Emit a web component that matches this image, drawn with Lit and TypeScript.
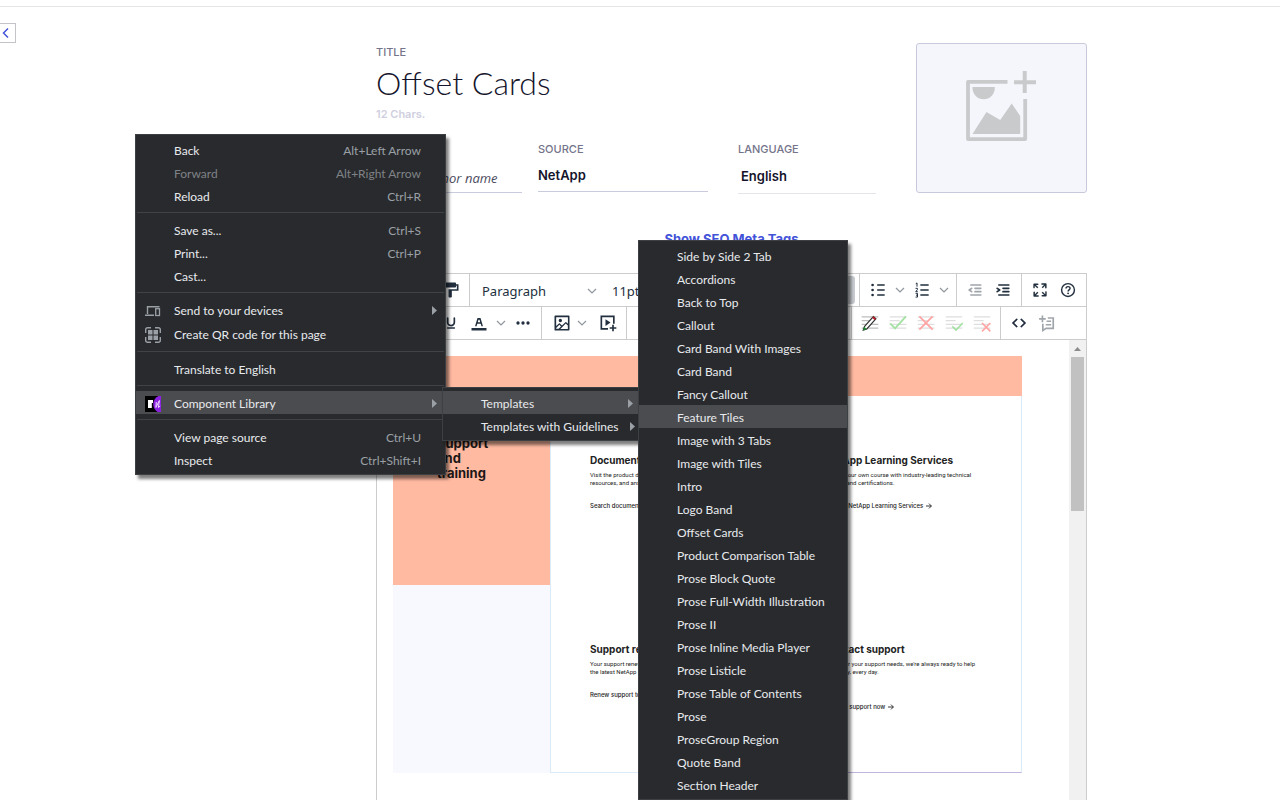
import { LitElement, html, css, svg, nothing } from "lit";
import { customElement, property } from "lit/decorators.js";

const chevron = html`<svg class="chev" viewBox="0 0 10 10" aria-hidden="true"><path d="M1 3l4 4 4-4" fill="none" stroke="#8f969e" stroke-width="1.200"/></svg>`;

const lines = (color: string) => svg`<path d="M2 4.500h20M2 9h12M2 13.500h20M2 18h20" stroke=${color} stroke-width="1.500" fill="none"/>`;

const glyphs: Record<string, unknown> = {
  undo: svg`<path d="M6.4 8H12c3.7 0 6.2 2 6.8 5.1.6 2.7-.4 5.6-2.3 6.8a1 1 0 0 1-1-1.8c1.1-.6 1.8-2.7 1.4-4.6-.5-2.1-2.1-3.5-4.9-3.5H6.4l3.3 3.3a1 1 0 1 1-1.4 1.4l-5-5a1 1 0 0 1 0-1.4l5-5a1 1 0 0 1 1.4 1.4L6.4 8Z"/>`,
  redo: svg`<path transform="matrix(-1 0 0 1 24 0)" d="M6.4 8H12c3.7 0 6.2 2 6.8 5.1.6 2.7-.4 5.6-2.3 6.8a1 1 0 0 1-1-1.8c1.1-.6 1.8-2.7 1.4-4.6-.5-2.1-2.1-3.5-4.9-3.5H6.4l3.3 3.3a1 1 0 1 1-1.4 1.4l-5-5a1 1 0 0 1 0-1.4l5-5a1 1 0 0 1 1.4 1.4L6.4 8Z"/>`,
  painter: svg`<path d="M18 5V4c0-.5-.4-1-1-1H5a1 1 0 0 0-1 1v4c0 .6.5 1 1 1h12c.6 0 1-.4 1-1V7h1v4H9v9c0 .6.4 1 1 1h2c.6 0 1-.4 1-1v-7h8V5h-3Z"/>`,
  bold: svg`<path d="M8 5h5a3.5 3.5 0 0 1 2 6.4A4 4 0 0 1 13.500 19H8zm2.200 2v3.800H13a1.900 1.900 0 0 0 0-3.800zm0 5.800V17h3.100a2.100 2.100 0 0 0 0-4.200z" fill-rule="evenodd"/>`,
  italic: svg`<path d="M10 5h7v2h-2.600l-2.600 10H14v2H7v-2h2.600l2.600-10H10z"/>`,
  underline: svg`<path d="M16 5c.6 0 1 .4 1 1v5.500a4 4 0 0 1-.4 1.800l-1 1.400a5.300 5.300 0 0 1-5.500 1 5 5 0 0 1-1.600-1c-.5-.4-.8-.9-1.100-1.400a4 4 0 0 1-.4-1.800V6c0-.6.4-1 1-1s1 .4 1 1v5.500c0 .3 0 .6.2 1l.6.7a3.300 3.300 0 0 0 2.200.8 3.400 3.400 0 0 0 2.200-.8c.3-.2.4-.5.6-.8l.2-.9V6c0-.6.4-1 1-1zM8 17h8c.6 0 1 .4 1 1s-.4 1-1 1H8a1 1 0 0 1 0-2z"/>`,
  forecolor: svg`<path d="M3 18h18v3H3z"/><path fill-rule="evenodd" d="M8.700 16h-.8a.5.5 0 0 1-.5-.6l2.700-9c.1-.3.3-.4.5-.4h2.800c.2 0 .4.100.5.400l2.700 9a.5.5 0 0 1-.5.600h-.8a.5.5 0 0 1-.4-.4l-.7-2.200c0-.3-.3-.4-.5-.4h-3.400c-.2 0-.4.100-.5.400l-.7 2.200c0 .3-.2.400-.4.400Zm2.600-7.600-.6 2a.5.5 0 0 0 .5.600h1.600a.5.5 0 0 0 .5-.6l-.6-2c0-.3-.3-.4-.5-.4h-.4c-.2 0-.4.100-.5.400Z"/>`,
  more: svg`<circle cx="6" cy="12" r="2"/><circle cx="12" cy="12" r="2"/><circle cx="18" cy="12" r="2"/>`,
  image: svg`<path fill-rule="nonzero" d="m5 15.700 3.300-3.200c.3-.3.7-.3 1 0L12 15l4.100-4c.3-.4.8-.4 1 0l2 1.900V5H5v10.700zM5 18V19h3l2.800-2.900-2-2L5 17.900zm14-3-2.500-2.400-6.400 6.500H19v-4zM4 3h16c.6 0 1 .4 1 1v16c0 .6-.4 1-1 1H4a1 1 0 0 1-1-1V4c0-.6.4-1 1-1zm6 8a2 2 0 1 0 0-4 2 2 0 0 0 0 4z"/>`,
  media: svg`<path d="M12 19H4V4h15v9" fill="none" stroke="currentColor" stroke-width="2"/><path d="M9 7.500v8l6-4z"/><path d="M18 14v8M14 18h8" stroke="currentColor" stroke-width="2"/>`,
  bullets: svg`<path d="M11 5h9v2h-9zm0 6h9v2h-9zm0 6h9v2h-9z"/><circle cx="5.500" cy="6" r="1.600"/><circle cx="5.500" cy="12" r="1.600"/><circle cx="5.500" cy="18" r="1.600"/>`,
  numbers: svg`<path d="M10 5h10v2H10zm0 6h10v2H10zm0 6h10v2H10z"/><path d="M4.500 4.500 6 3.500V8M4.300 10h2.200v1.500L4.500 14h2.400M4.300 16h2.300v4.500H4.300M4.800 18.200h1.800" fill="none" stroke="currentColor" stroke-width="1.200"/>`,
  outdent: svg`<path d="M7 5h12c.6 0 1 .4 1 1s-.4 1-1 1H7a1 1 0 1 1 0-2zm5 4h7c.6 0 1 .4 1 1s-.4 1-1 1h-7a1 1 0 0 1 0-2zm0 4h7c.6 0 1 .4 1 1s-.4 1-1 1h-7a1 1 0 0 1 0-2zm-5 4h12a1 1 0 0 1 0 2H7a1 1 0 0 1 0-2zm1.600-3.800a1 1 0 0 1-1.200 1.600l-3-2a1 1 0 0 1 0-1.600l3-2a1 1 0 0 1 1.200 1.600L6.800 12l1.800 1.200z"/>`,
  indent: svg`<path d="M7 5h12c.6 0 1 .4 1 1s-.4 1-1 1H7a1 1 0 1 1 0-2zm5 4h7c.6 0 1 .4 1 1s-.4 1-1 1h-7a1 1 0 0 1 0-2zm0 4h7c.6 0 1 .4 1 1s-.4 1-1 1h-7a1 1 0 0 1 0-2zm-5 4h12a1 1 0 0 1 0 2H7a1 1 0 0 1 0-2zm-2.600-3.800L6.200 12l-1.800-1.200a1 1 0 0 1 1.200-1.600l3 2a1 1 0 0 1 0 1.600l-3 2a1 1 0 1 1-1.200-1.600z"/>`,
  fullscreen: svg`<path d="m15.300 10-1.200-1.300 2.900-3h-2.300a.9.9 0 1 1 0-1.700H19c.5 0 .9.400.9.900v4.400a.9.9 0 1 1-1.800 0V7l-2.900 3Zm0 4 3 3v-2.300a.9.9 0 1 1 1.700 0V19c0 .5-.4.900-.9.900h-4.400a.9.9 0 1 1 0-1.800H17l-3-2.900 1.300-1.200ZM10 15.400l-2.900 3h2.300a.9.9 0 1 1 0 1.700H5a.9.9 0 0 1-.9-.9v-4.400a.9.9 0 1 1 1.800 0V17l2.900-3 1.200 1.300ZM8.700 10 5.700 7v2.300a.9.9 0 0 1-1.700 0V5c0-.5.400-.9.900-.9h4.400a.9.9 0 0 1 0 1.800H7l3 2.900-1.300 1.200Z"/>`,
  help: svg`<circle cx="12" cy="12" r="7.700" fill="none" stroke="currentColor" stroke-width="1.700"/><path d="M9.600 10.200c0-3 4.900-3 4.900-.2 0 1.800-2.400 1.900-2.400 3.700" fill="none" stroke="currentColor" stroke-width="1.700"/><circle cx="12.100" cy="16" r="1.100"/>`,
  track: svg`${lines("#bdbdbd")}<path d="M5.500 16 16 4.300l3 2.700L8.200 19.100 4 20.500z" fill="#fff" stroke="#333" stroke-width="1.500"/><path d="m16 4 3.200 3-1.500 1.600-3.100-2.900z" fill="#b3202a"/><path d="m4.900 16.300 3.300 3.300-4.400 1.400z" fill="#1f8a34"/>`,
  accept: svg`${lines("#dedede")}<path d="m2.500 12.500 6 6L21.500 4" fill="none" stroke="#a4e2a4" stroke-width="2.200"/>`,
  reject: svg`${lines("#dedede")}<path d="m4 4 16 16M20 4 4 20" fill="none" stroke="#ffa5a5" stroke-width="2.200"/>`,
  acceptOne: svg`${lines("#dedede")}<path d="m10 16 4.500 4.500L22.500 12" fill="none" stroke="#a4e2a4" stroke-width="2"/>`,
  rejectOne: svg`${lines("#dedede")}<path d="m12 12 10 10M22 12 12 22" fill="none" stroke="#ffa5a5" stroke-width="2"/>`,
  code: svg`<path d="M9.800 15.700c.3.3.3.8 0 1-.3.400-.9.400-1.200 0l-4.400-4.100a.8.8 0 0 1 0-1.200l4.400-4.200c.3-.3.9-.3 1.200 0 .3.3.3.8 0 1.100L6 12l3.800 3.700ZM14.200 15.700c-.3.3-.3.8 0 1 .4.400.9.400 1.200 0l4.400-4.100c.3-.3.3-.9 0-1.200l-4.400-4.200a.8.8 0 0 0-1.200 0c-.3.3-.3.8 0 1.100L18 12l-3.800 3.700Z" stroke="currentColor" stroke-width=".5"/>`,
  comment: svg`<path d="M6.500 3v8M2.500 7h8" stroke="currentColor" stroke-width="2"/><path d="M13 6h6.500v12.500H11L7 21v-8" fill="none" stroke="currentColor" stroke-width="2"/><path d="M11.500 10h5.500M10.500 14h6.500" stroke="currentColor" stroke-width="1.800"/>`,
};

@customElement("tool-button")
class ToolButton extends LitElement {
  @property() icon = "";
  @property() label = "";
  @property() kind = "plain";
  @property({ type: Boolean }) dim = false;

  static styles = css`
    :host { display: flex; }
    button {
      display: flex; align-items: center; justify-content: center;
      width: 28px; height: 28px; padding: 0; border: 0; border-radius: 3px;
      background: none; color: #222f3e; fill: currentColor;
    }
    .dim { color: #a0a5ab; }
    .arrow { width: 16px; }
    .menu { width: 48px; gap: 5px; justify-content: flex-start; padding-left: 6px; }
    .icon { width: 20px; height: 20px; flex: none; }
    .chev { width: 10px; height: 10px; flex: none; }
  `;

  render() {
    const art = html`<svg class="icon" viewBox="0 0 24 24" aria-hidden="true">${glyphs[this.icon]}</svg>`;
    return html`
      <button class="${this.kind === "menu" ? "menu" : ""} ${this.dim ? "dim" : ""}" aria-label=${this.label}>
        ${art}${this.kind === "menu" ? chevron : nothing}
      </button>
      ${this.kind === "split" ? html`<button class="arrow" aria-label="${this.label} options">${chevron}</button>` : nothing}
    `;
  }
}

type Entry = { text: string; keys?: string; icon?: string; sub?: boolean; on?: boolean; off?: boolean } | null;

const menuIcons: Record<string, unknown> = {
  devices: html`<svg viewBox="0 0 16 16" width="16" height="16" aria-hidden="true"><path d="M2.500 11V3.700h12M0 12.300h9" fill="none" stroke="#9aa0a6" stroke-width="1.400"/><rect x="10.700" y="5.700" width="3.800" height="6.800" fill="none" stroke="#9aa0a6" stroke-width="1.300"/></svg>`,
  qr: html`<svg viewBox="0 0 16 16" width="16" height="16" aria-hidden="true"><path d="M.7 6V2.500A1.800 1.800 0 0 1 2.500.7H6M10 .7h3.500a1.800 1.800 0 0 1 1.800 1.800V6M15.300 10v3.500a1.800 1.800 0 0 1-1.800 1.800H10M6 15.300H2.500a1.800 1.800 0 0 1-1.800-1.800V10" fill="none" stroke="#9aa0a6" stroke-width="1.400"/><path d="M3 3h4.500v4.500H3zM8.500 3H13v4.500H8.500zM3 8.500h4.500V13H3zM8.500 8.500H13V13H8.500z" fill="#9aa0a6"/></svg>`,
  library: html`<svg viewBox="0 0 16 16" width="16" height="16" aria-hidden="true"><path d="M0 0h16v16H0z"/><path d="M3 4h5v3H6.800v5H3z" fill="#fff"/><path d="M16 0v16h-3.500C9.500 14 8 11 8.300 7.500 8.600 4 10.500 1.500 13.500 0z" fill="#8a22e0"/><path d="m11.300 6-.4 5.500 3.500-7-1 7 1.800-1.500" fill="none" stroke="#f0dcff" stroke-width="1"/></svg>`,
};

@customElement("dark-menu")
class DarkMenu extends LitElement {
  @property({ attribute: false }) entries: Entry[] = [];

  static styles = css`
    :host {
      display: block; box-sizing: border-box; padding: 3px 0;
      border: 1px solid #3c4043; background: #292a2d;
      box-shadow: 3px 4px 3px rgba(0, 0, 0, 0.5);
      font: 12px/21px Lato, "Open Sans", sans-serif;
    }
    .row {
      display: grid; grid-template-columns: 38px 1fr auto 14px; align-items: center;
      box-sizing: border-box; width: 100%; height: 23px; padding: 2px 8px 0 0; border: 0;
      background: none; color: #e8eaed; font: inherit; text-align: left; white-space: nowrap;
    }
    .tall { height: 25px; }
    .on { background: #4b4c4f; }
    .off { color: #7f8387; }
    .icon { display: flex; padding-left: 9px; }
    .keys { color: #9aa0a6; margin-right: 2px; }
    .off .keys { color: #7f8387; }
    .arrow { justify-self: end; width: 5px; height: 9px; fill: #9aa0a6; }
    hr { height: 1px; margin: 5px 1px; border: 0; background: #3f4246; }
  `;

  render() {
    return html`${this.entries.map((e) =>
      e === null
        ? html`<hr />`
        : html`<button role="menuitem" class="row ${e.on ? "on" : ""} ${e.off ? "off" : ""} ${e.icon === "qr" ? "tall" : ""}" ?disabled=${!!e.off}>
            <span class="icon">${e.icon ? menuIcons[e.icon] : nothing}</span>
            <span>${e.text}</span>
            <span class="keys">${e.keys ?? nothing}</span>
            ${e.sub ? html`<svg class="arrow" viewBox="0 0 5 9" aria-hidden="true"><path d="M0 0l5 4.500L0 9z"/></svg>` : html`<span></span>`}
          </button>`
    )}`;
  }
}

const pageMenu: Entry[] = [
  { text: "Back", keys: "Alt+Left Arrow" },
  { text: "Forward", keys: "Alt+Right Arrow", off: true },
  { text: "Reload", keys: "Ctrl+R" },
  null,
  { text: "Save as...", keys: "Ctrl+S" },
  { text: "Print...", keys: "Ctrl+P" },
  { text: "Cast..." },
  null,
  { text: "Send to your devices", icon: "devices", sub: true },
  { text: "Create QR code for this page", icon: "qr" },
  null,
  { text: "Translate to English" },
  null,
  { text: "Component Library", icon: "library", sub: true, on: true },
  null,
  { text: "View page source", keys: "Ctrl+U" },
  { text: "Inspect", keys: "Ctrl+Shift+I" },
];

const libraryMenu: Entry[] = [
  { text: "Templates", sub: true, on: true },
  { text: "Templates with Guidelines", sub: true },
];

const templateMenu: Entry[] = [
  "Side by Side 2 Tab", "Accordions", "Back to Top", "Callout", "Card Band With Images", "Card Band",
  "Fancy Callout", "Feature Tiles", "Image with 3 Tabs", "Image with Tiles", "Intro", "Logo Band",
  "Offset Cards", "Product Comparison Table", "Prose Block Quote", "Prose Full-Width Illustration",
  "Prose II", "Prose Inline Media Player", "Prose Listicle", "Prose Table of Contents", "Prose",
  "ProseGroup Region", "Quote Band", "Section Header",
].map((text) => ({ text, on: text === "Feature Tiles" }));

const cards = [
  { head: "Documentation", body: ["Visit the product documentation,", "resources, and answers."], link: "Search documentation" },
  { head: "NetApp Learning Services", body: ["Design your own course with industry-leading technical", "training and certifications."], link: "Explore NetApp Learning Services" },
  { head: "Support renewals", body: ["Your support renewal gives you", "the latest NetApp updates."], link: "Renew support today" },
  { head: "Contact support", body: ["Whatever your support needs, we're always ready to help", "every day, every day."], link: "Contact support now", low: true },
];

@customElement("app-root")
class AppRoot extends LitElement {
  static styles = css`
    :host {
      display: block; position: relative; height: 100vh; overflow: hidden; background: #fff;
      font: 14px/20px Inter, "Open Sans", sans-serif; color: #14142b;
    }
    * { box-sizing: border-box; }
    .topbar { height: 7px; border-bottom: 1px solid #e4e4e6; }
    .layout { display: grid; grid-template-columns: 376px minmax(0, 1fr) 193px; }
    .collapse {
      display: flex; align-items: center; width: 16px; height: 20px; margin-top: 16px; padding: 0 0 0 2px;
      border: 1px solid #c4c4c8; border-left: 0; background: #fff;
    }
    main { padding-top: 36px; }
    .head { display: flex; justify-content: space-between; align-items: flex-start; }
    .label { display: block; font-size: 11px; line-height: 18px; font-weight: 500; color: #74748a; }
    input, select {
      display: block; width: 100%; margin: 0; padding: 0; border: 0; border-radius: 0; outline: 0;
      background: none; font: inherit; color: inherit; appearance: none;
    }
    .title { height: 44px; font: 300 32px/44px Lato, sans-serif; }
    .chars { margin-top: 2px; font-size: 11px; line-height: 14px; font-weight: 600; color: #cfcfe0; }
    .fields { display: flex; align-items: flex-start; margin-top: 19px; }
    .author { width: 146px; margin-right: 16px; padding-top: 18px; }
    .source { width: 170px; margin-right: 30px; }
    .language { width: 138px; }
    .fields input, .fields select { height: 34px; border-bottom: 1px solid #cbcbe0; font-size: 13px; font-weight: 600; }
    .fields .name { height: 35px; padding-top: 6px; font-family: "Open Sans", sans-serif; font-weight: 400; font-style: italic; }
    .name::placeholder { color: #4b4b5e; opacity: 1; }
    .fields select { height: 36px; padding-left: 3px; border-color: #e4e4ea; }
    .thumb {
      display: flex; justify-content: center; width: 171px; height: 150px; padding: 27px 0 0;
      border: 1px solid #c9c9de; border-radius: 3px; background: #f5f6fb;
    }
    .seo { display: block; width: fit-content; margin: 35px auto 24px; font-size: 13px; font-weight: 700; color: #4353d9; text-decoration: none; }
    .editor { border: 1px solid #ccc; color: #222f3e; }
    .tools { display: flex; height: 33px; border-bottom: 1px solid #ccc; }
    .group { display: flex; align-items: center; padding: 0 4px; border-right: 1px solid #ccc; }
    .group:last-child { border-right: 0; }
    .wide { flex: 1; min-width: 0; }
    .pick {
      display: flex; align-items: center; justify-content: space-between; width: 130px; height: 28px;
      padding: 2px 7px 0 8px; border: 0; background: none; color: #222f3e; font: 13px/20px "Noto Sans", sans-serif;
    }
    .pick .chev { width: 10px; height: 10px; }
    .active { width: 28px; height: 28px; margin-left: auto; border: 0; border-radius: 3px; background: #c8cbcf; }
    .last { width: 85px; }
    .canvas { display: flex; height: 560px; }
    .page { flex: 1; padding: 16px 47px 0 16px; }
    .scroll { width: 17px; padding: 7px 2px; background: #f1f1f1; }
    .scroll svg { display: block; margin: 0 auto 6px; }
    .thumbbar { width: 13px; height: 154px; background: #c1c1c1; }
    .band { height: 40px; background: #ffbaa1; }
    .board { display: grid; grid-template-columns: 157px 1fr 1fr; grid-template-rows: 189px 188px; }
    .lead { padding: 40px 0 0 44px; background: #ffbaa1; color: #1c1717; font-size: 13px; line-height: 15px; font-weight: 700; }
    .pale { background: #f7f9ff; }
    .card { padding: 57px 0 0 39px; white-space: nowrap; min-width: 0; color: #222; }
    .first { border-left: 1px solid #dcebfa; }
    .second { border-right: 1px solid #dcebfa; }
    .bottom { border-bottom: 1px solid #dcebfa; }
    .bottom.second { border-bottom-color: #c3b3df; }
    .card h3 { margin: 0 0 4px; font-size: 10px; line-height: 14px; font-weight: 700; }
    .card p { margin: 0; font-family: Roboto, sans-serif; font-size: 6px; line-height: 8px; }
    .card a { display: flex; align-items: center; gap: 3px; margin-top: 15px; font-size: 6px; line-height: 8px; font-weight: 500; color: inherit; text-decoration: none; }
    .card .low { margin-top: 27px; }
    dark-menu { position: absolute; }
    .m1 { left: 135px; top: 134px; width: 311px; }
    .m2 { left: 442px; top: 387px; width: 200px; }
    .m3 { left: 638px; top: 240px; width: 210px; }
  `;

  render() {
    const tb = (icon: string, label: string, kind = "plain", dim = false) =>
      html`<tool-button .icon=${icon} .label=${label} .kind=${kind} .dim=${dim}></tool-button>`;
    return html`
      <div class="topbar"></div>
      <div class="layout">
        <div>
          <button class="collapse" aria-label="Collapse"><svg width="8" height="12" viewBox="0 0 8 12"><path d="M6 1.500 1.500 6 6 10.500" fill="none" stroke="#4353d9" stroke-width="1.500"/></svg></button>
        </div>
        <main>
          <div class="head">
            <div>
              <label class="label" for="title">TITLE</label>
              <input id="title" class="title" value="Offset Cards" />
              <div class="chars">12 Chars.</div>
              <div class="fields">
                <div class="author">
                  <input class="name" aria-label="Author" placeholder="Provide author name" />
                </div>
                <div class="source">
                  <label class="label" for="source">SOURCE</label>
                  <input id="source" value="NetApp" />
                </div>
                <div class="language">
                  <label class="label" for="language">LANGUAGE</label>
                  <select id="language"><option>English</option></select>
                </div>
              </div>
            </div>
            <button class="thumb" aria-label="Add image">
              <svg width="73" height="72" viewBox="0 0 73 72" fill="#c9cacc">
                <path d="M42.500 10.900H3v57.200h57.200V28" fill="none" stroke="#c9cacc" stroke-width="3.800" stroke-linejoin="round"/>
                <path d="M49 9.200h8.700V0h4v9.200H71v4h-9.300V22h-4v-8.800H49zM7.500 16h22.300v1a11 11 0 0 1-22.300 0zM7.500 63 21.500 41l13.700 8 11.500-16.500 8.500 12.500V63z"/>
              </svg>
            </button>
          </div>
          <a class="seo" href="#seo">Show SEO Meta Tags</a>
          <div class="editor">
            <div class="tools">
              <div class="group">${tb("undo", "Undo")}${tb("redo", "Redo")}${tb("painter", "Format painter")}</div>
              <div class="group wide">
                <button class="pick">Paragraph${chevron}</button>
                <button class="pick">11pt${chevron}</button>
                <button class="active" aria-label="Align"></button>
              </div>
              <div class="group">${tb("bullets", "Bullet list", "split")}${tb("numbers", "Numbered list", "split")}</div>
              <div class="group">${tb("outdent", "Outdent", "plain", true)}${tb("indent", "Indent")}</div>
              <div class="group">${tb("fullscreen", "Fullscreen")}${tb("help", "Help")}</div>
            </div>
            <div class="tools">
              <div class="group">${tb("bold", "Bold")}${tb("italic", "Italic")}${tb("underline", "Underline")}${tb("forecolor", "Text color", "split")}${tb("more", "More")}</div>
              <div class="group">${tb("image", "Image", "menu")}${tb("media", "Media")}</div>
              <div class="group wide"></div>
              <div class="group">${tb("track", "Track changes")}${tb("accept", "Accept all")}${tb("reject", "Reject all")}${tb("acceptOne", "Accept")}${tb("rejectOne", "Reject")}</div>
              <div class="group last">${tb("code", "Source code")}${tb("comment", "Add comment", "plain", true)}</div>
            </div>
            <div class="canvas">
              <div class="page">
                <div class="band"></div>
                <div class="board">
                  <div class="lead">Support<br />and<br />training</div>
                  ${cards.map((c, i) => html`
                    ${i === 2 ? html`<div class="pale"></div>` : nothing}
                    <div class="card ${i % 2 ? "second" : "first"} ${i > 1 ? "bottom" : ""}">
                      <h3>${c.head}</h3>
                      ${c.body.map((t) => html`<p>${t}</p>`)}
                      <a href="#card" class=${c.low ? "low" : ""}>${c.link}<svg width="6" height="6" viewBox="0 0 6 6"><path d="M0 3h5.300M3 .6 5.400 3 3 5.400" fill="none" stroke="#222" stroke-width=".9"/></svg></a>
                    </div>`)}
                </div>
              </div>
              <div class="scroll">
                <svg width="7" height="4" viewBox="0 0 7 4"><path d="M3.500 0 7 4H0z" fill="#8c8c8c"/></svg>
                <div class="thumbbar"></div>
              </div>
            </div>
          </div>
        </main>
      </div>
      <dark-menu class="m1" role="menu" .entries=${pageMenu}></dark-menu>
      <dark-menu class="m2" role="menu" .entries=${libraryMenu}></dark-menu>
      <dark-menu class="m3" role="menu" .entries=${templateMenu}></dark-menu>
    `;
  }
}
